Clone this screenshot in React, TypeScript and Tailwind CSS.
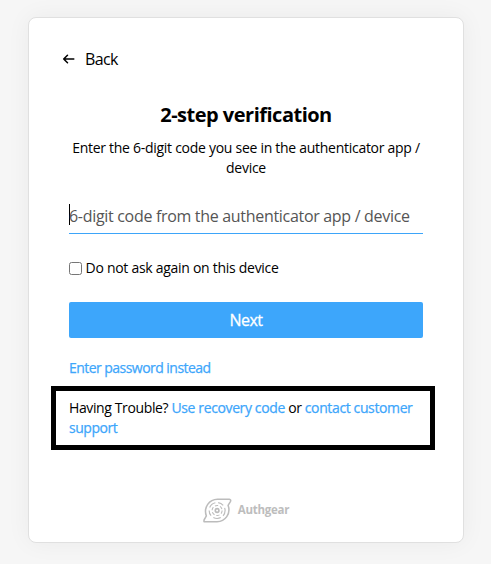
import type { ReactNode } from "react";

function Line({ children, className }: { children: ReactNode; className: string }) {
  return <span className={`block whitespace-nowrap ${className}`}>{children}</span>;
}

function Logo() {
  return (
    <svg width="29" height="25" viewBox="0 0 30 26" fill="none" stroke="#bcbcbc" strokeLinecap="butt" strokeLinejoin="round">
      <path d="M1 24.6 Q0.6 23.2 1.7 21.6 L3.4 18.7 C0.2 9.5 6.5 1.5 15 1.3 H27.3 Q29.4 1.7 28.4 3.7 L26 7.6 C29.2 16.5 23 24.5 14.5 24.7 H2.2 Q1.2 24.8 1 24.6Z" strokeWidth="1.6" />
      <circle cx="14.6" cy="13" r="8.3" strokeWidth="1.2" strokeDasharray="6 3 8 3" />
      <circle cx="14.6" cy="13" r="5.2" strokeWidth="1.1" strokeDasharray="3.4 2" />
      <circle cx="14.6" cy="13" r="1.9" strokeWidth="1.7" />
    </svg>
  );
}

export default function App() {
  return (
    <main className="h-[564px] w-[491px] overflow-hidden bg-[#f6f6f6] pl-7 pt-[17px] font-['Open_Sans','Noto_Sans',sans-serif] text-sm leading-5 text-black">
      <section className="flex h-[526px] w-[436px] flex-col rounded-lg border border-[#e0e0e0] bg-white px-10 shadow-[0_0_24px_rgba(0,0,0,0.05)]">
        <button className="-ml-[7px] mt-[31px] flex h-5 items-center self-start text-base leading-5">
          <svg width="13" height="12" viewBox="0 0 13 12" fill="none" stroke="black" strokeWidth="1.5" strokeLinecap="round" strokeLinejoin="round">
            <path d="M11.8 6H1.7M5.5 2.2 1.7 6l3.8 3.8" />
          </svg>
          <span className="ml-[10px] tracking-[-0.65px]">Back</span>
        </button>
        <h1 className="mt-[32px] text-center text-[20px] font-bold leading-7 tracking-[-0.5px]">2-step verification</h1>
        <p className="mt-[9px] text-center">
          <Line className="tracking-[-0.28px]">Enter the 6-digit code you see in the authenticator app /</Line>
          <Line className="tracking-[-0.28px]">device</Line>
        </p>
        <div className="mt-[26px] flex h-[30px] items-start border-b border-[#3da5f9] text-base text-[#555]">
          <span className="-mr-px h-[21px] w-px shrink-0 bg-black" />
          <Line className="leading-6 tracking-[-0.31px]">6-digit code from the authenticator app / device</Line>
        </div>
        <label className="mt-6 flex h-5 items-center">
          <input type="checkbox" className="m-0 h-[13px] w-[13px]" />
          <span className="ml-[3.5px] whitespace-nowrap tracking-[-0.28px]">Do not ask again on this device</span>
        </label>
        <button className="mt-6 h-9 shrink-0 rounded-[2px] bg-[#3da6fb] text-base tracking-[-0.5px] text-white [-webkit-text-stroke:0.3px]">Next</button>
        <a className="mt-5 self-start whitespace-nowrap tracking-[-0.54px] text-[#3da6fb] [-webkit-text-stroke:0.25px]">Enter password instead</a>
        <div className="-ml-[18px] mt-2 h-[64px] w-[384px] shrink-0 border-[5px] border-black pl-[13px] pt-[7px]">
          <Line className="tracking-[-0.38px]">
            Having Trouble? <a className="text-[#3da6fb] [-webkit-text-stroke:0.25px]">Use recovery code</a> or <a className="text-[#3da6fb] [-webkit-text-stroke:0.25px]">contact customer</a>
          </Line>
          <Line className="tracking-[-0.45px] text-[#3da6fb] [-webkit-text-stroke:0.25px]">support</Line>
        </div>
        <footer className="mt-[47px] flex h-[26px] items-center justify-center">
          <Logo />
          <span className="ml-[6px] text-[11.5px] font-bold tracking-[-0.27px] text-[#bdbdbd]">Authgear</span>
        </footer>
      </section>
    </main>
  );
}
